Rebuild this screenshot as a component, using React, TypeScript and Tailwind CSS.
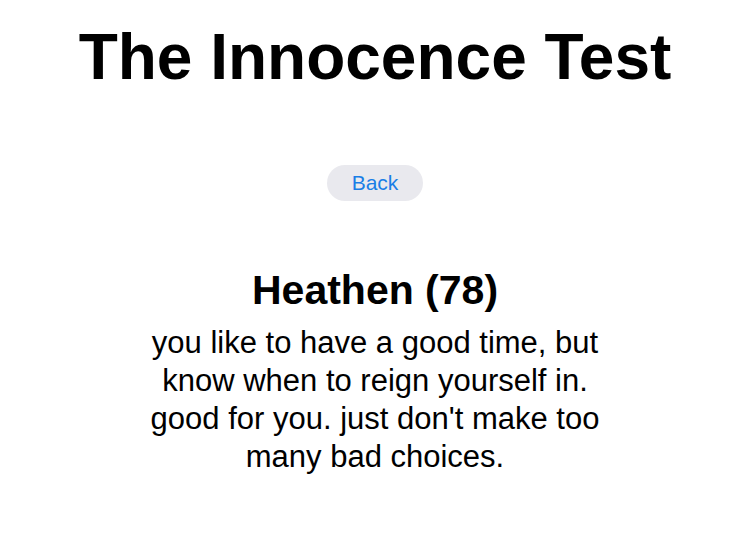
export default function App() {
  return (
    <div className="min-h-screen bg-white flex flex-col items-center font-['Liberation_Sans',Arial,sans-serif] text-black">
      <h1 className="mt-[18px] text-[64px] leading-[78px] font-bold">The Innocence Test</h1>
      <button className="mt-[69px] w-[96px] h-[36px] rounded-full bg-[#e9e9ee] text-[#1a7ee6] text-[21px]">
        Back
      </button>
      <h2 className="mt-[65px] text-[41px] leading-[48px] font-bold">Heathen (78)</h2>
      <p className="mt-[10px] w-[466px] text-center text-[31px] leading-[38px]">
        you like to have a good time, but know when to reign yourself in. good for you. just
        don't make too many bad choices.
      </p>
    </div>
  );
}
